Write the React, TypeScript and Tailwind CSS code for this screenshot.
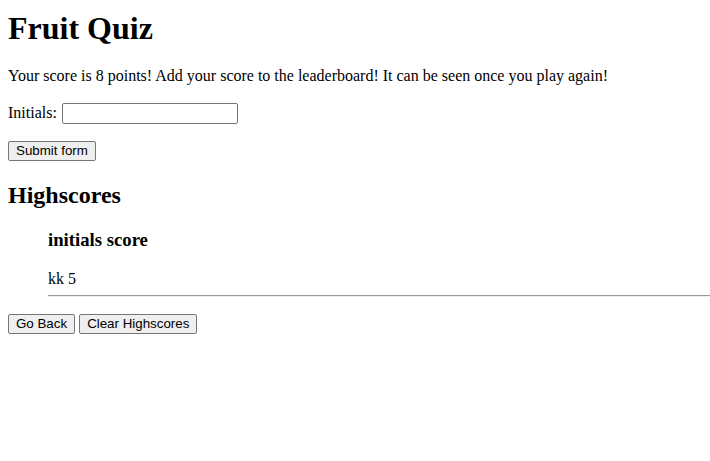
import React from "react";

const btn =
  "font-['Liberation_Sans',Arial,sans-serif] text-[13.33px] leading-[16px] h-[20px] text-black bg-[#efefef] border border-[#767676] rounded-[2px] px-[7px]";

export default function App() {
  return (
    <div className="bg-white w-[710px] h-[461px] px-2 font-['Liberation_Serif','Times_New_Roman',serif] text-black">
      <h1 className="pt-[10px] text-[32px] leading-[37px] font-bold">Fruit Quiz</h1>
      <p className="mt-[20px] text-[16px] leading-[18px]">
        Your score is 8 points! Add your score to the leaderboard! It can be seen once you play again!
      </p>
      <div className="mt-[18px] flex items-baseline text-[16px] leading-[18px]">
        <label>Initials:</label>
        <input
          type="text"
          className="ml-[5px] w-[176px] h-[21px] border border-[#767676] rounded-[2px] px-[2px] font-['Liberation_Sans',Arial,sans-serif] text-[13.33px] leading-[15px] bg-white"
        />
      </div>
      <div className="mt-[14px]">
        <button className={btn}>Submit form</button>
      </div>
      <h2 className="mt-[19px] text-[24px] leading-[28px] font-bold">Highscores</h2>
      <div className="ml-[40px] mr-[-8px]">
        <h3 className="mt-[20px] text-[18.72px] leading-[22px] font-bold">initials score</h3>
        <p className="mt-[19px] text-[16px] leading-[18px]">kk 5</p>
        <div className="mt-[7px] border-t border-t-[#9a9a9a] border-b border-b-[#eeeeee]" />
      </div>
      <div className="mt-[17px] flex gap-[4px]">
        <button className={btn}>Go Back</button>
        <button className={btn}>Clear Highscores</button>
      </div>
    </div>
  );
}
